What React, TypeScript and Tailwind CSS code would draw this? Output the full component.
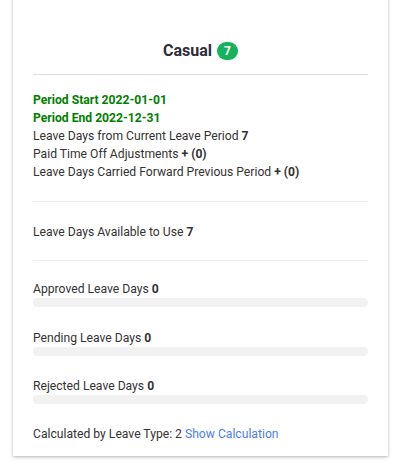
import React from "react";

function Bar() {
  return <div className="h-[9px] w-full rounded-[4px] bg-[#f2f2f2]" />;
}

export default function App() {
  return (
    <div className="w-[413px] h-[468px] bg-white overflow-hidden" style={{ fontFamily: "Roboto, 'Liberation Sans', sans-serif" }}>
      <div className="ml-[13px] w-[375px] -mt-[10px] bg-white shadow-[0_1px_3px_rgba(0,0,0,0.3)] px-[20px] pt-[51px] pb-[13px] text-[12.15px] leading-[18px] text-[#333]">
        <div className="flex items-center justify-center gap-[5px] h-[20px]">
          <span className="text-[16px] font-bold text-[#2d2d3a]">Casual</span>
          <span className="flex items-center justify-center w-[21px] h-[18px] rounded-full bg-[#16b35c] text-white text-[12px] font-bold">7</span>
        </div>
        <div className="mt-[13px] h-px bg-[#dedede]" />
        <div className="mt-[16px]">
          <div className="font-bold text-[#008000]">Period Start 2022-01-01</div>
          <div className="font-bold text-[#008000]">Period End 2022-12-31</div>
          <div>Leave Days from Current Leave Period <b>7</b></div>
          <div>Paid Time Off Adjustments <b>+ (0)</b></div>
          <div>Leave Days Carried Forward Previous Period <b>+ (0)</b></div>
        </div>
        <div className="mt-[20px] h-px bg-[#ececec]" />
        <div className="mt-[21px]">Leave Days Available to Use <b>7</b></div>
        <div className="mt-[19px] h-px bg-[#ececec]" />
        <div className="mt-[19px]">Approved Leave Days <b>0</b></div>
        <Bar />
        <div className="mt-[22px]">Pending Leave Days <b>0</b></div>
        <Bar />
        <div className="mt-[21px]">Rejected Leave Days <b>0</b></div>
        <Bar />
        <div className="mt-[21px]">
          Calculated by Leave Type: 2 <span className="text-[#4a7ef0]">Show Calculation</span>
        </div>
      </div>
    </div>
  );
}
